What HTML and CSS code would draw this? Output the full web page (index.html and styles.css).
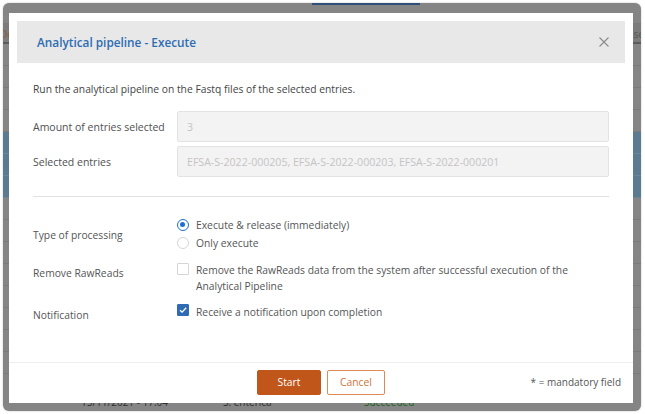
FILE: index.html
```html
<!DOCTYPE html>
<html>
<head>
<meta charset="utf-8">
<link rel="stylesheet" href="styles.css">
</head>
<body>
<div class="screen">
  <div class="bg-tab"></div>
  <div class="bg-rows">
    <div class="bg-row"></div>
    <div class="bg-row head"><span class="bg-l">De</span><span class="bg-r">se</span></div>
    <div class="bg-row"></div>
    <div class="bg-row"></div>
    <div class="bg-row"></div>
    <div class="bg-row"></div>
    <div class="bg-row sel"></div>
    <div class="bg-row sel"></div>
    <div class="bg-row sel"></div>
    <div class="bg-row"></div>
    <div class="bg-row"></div>
    <div class="bg-row"></div>
    <div class="bg-row"></div>
    <div class="bg-row"></div>
    <div class="bg-row"></div>
    <div class="bg-row"></div>
    <div class="bg-row"></div>
    <div class="bg-row last">
      <span class="c1">15/11/2021 - 17:04</span>
      <span class="c2">S. enterica</span>
      <span class="c3">Succeeded</span>
    </div>
  </div>

  <div class="modal">
    <div class="modal-head">
      <span class="modal-title">Analytical pipeline - Execute</span>
      <svg class="close" width="10" height="10" viewBox="0 0 10 10"><path d="M0.5 0.5 L9.5 9.5 M9.5 0.5 L0.5 9.5" stroke="#8a8a8a" stroke-width="1.1" fill="none"/></svg>
    </div>
    <div class="modal-body">
      <p class="intro">Run the analytical pipeline on the Fastq files of the selected entries.</p>
      <div class="form-grid">
        <div class="label strong">Amount of entries selected</div>
        <div class="input">3</div>
        <div class="label strong">Selected entries</div>
        <div class="input">EFSA-S-2022-000205, EFSA-S-2022-000203, EFSA-S-2022-000201</div>
      </div>
      <div class="sep"></div>
      <div class="opt-grid">
        <div class="label mid">Type of processing</div>
        <div class="radios">
          <div class="opt"><span class="radio on"></span><span>Execute &amp; release (immediately)</span></div>
          <div class="opt"><span class="radio"></span><span>Only execute</span></div>
        </div>
        <div class="label top">Remove RawReads</div>
        <div class="opt check-opt"><span class="box"></span><span class="check-text">Remove the RawReads data from the system after successful execution of the Analytical Pipeline</span></div>
        <div class="label top">Notification</div>
        <div class="opt check-opt"><span class="box on"><svg width="12" height="12" viewBox="0 0 12 12"><path d="M3 6.2 L5.1 8.2 L9.2 3.8" stroke="#fff" stroke-width="1.3" fill="none"/></svg></span><span class="check-text">Receive a notification upon completion</span></div>
      </div>
    </div>
    <div class="modal-foot">
      <div></div>
      <div class="buttons">
        <button class="btn primary">Start</button>
        <button class="btn secondary">Cancel</button>
      </div>
      <div class="mandatory">* = mandatory field</div>
    </div>
  </div>
</div>
</body>
</html>
```

FILE: styles.css
```css
* { box-sizing: border-box; }
html, body { margin: 0; padding: 0; background: #fff; }
body { width: 645px; height: 414px; overflow: hidden; font-family: "Open Sans", "Noto Sans", sans-serif; }

.screen {
  position: relative;
  margin: 3px 4px 0 3px;
  height: 408px;
  background: #858585;
  border-radius: 6px;
  overflow: hidden;
  box-shadow: 0 0 2px rgba(0,0,0,0.25);
}

.bg-tab {
  position: absolute;
  left: 309px;
  top: 0;
  width: 108px;
  height: 2px;
  background: #2f4f78;
}

.bg-rows { display: flex; flex-direction: column; height: 100%; }
.bg-row {
  height: 22px;
  flex: none;
  border-bottom: 1px solid #7a7a7a;
  position: relative;
  font-size: 10px;
  color: #2e2e2e;
}
.bg-row:first-child { height: 21px; }
.bg-row.head { height: 20px; background: #7c7c7c; border-bottom: 2px solid #5c5c5c; }
.bg-row.sel { background: #5d7b90; border-bottom-color: #6a8699; }
.bg-l { position: absolute; left: -3px; top: 3px; color: #8a5a3a; }
.bg-r { position: absolute; right: -3px; top: 3px; color: #555; }
.bg-row.last { height: 14px; border: 0; margin-top: auto; overflow: hidden; }
.bg-row.last span { position: absolute; top: -2px; line-height: 14px; }
.c1 { left: 78px; }
.c2 { left: 220px; }
.c3 { left: 361px; color: #17631c; }

.modal {
  position: absolute;
  left: 6px;
  top: 10px;
  width: 624px;
  height: 390px;
  background: #fff;
  display: flex;
  flex-direction: column;
}

.modal-head {
  margin: 8px 8px 0;
  height: 42px;
  background: #e8e8e8;
  display: flex;
  align-items: center;
  justify-content: space-between;
  padding: 0 16px 0 20px;
}
.modal-title {
  color: #2d6cb3;
  font-size: 11.8px;
  font-weight: 600;
}
.close { display: block; }

.modal-body {
  flex: 1;
  padding: 18px 24px 0;
  color: #555;
  font-size: 10.3px;
}
.intro { margin: 0; line-height: 16px; color: #444; }

.form-grid {
  margin-top: 14px;
  display: grid;
  grid-template-columns: 144px 1fr;
  row-gap: 4px;
  align-items: center;
}
.label { color: #555; }
.label.strong { font-size: 10.5px; color: #505050; padding-top: 1px; }
.input {
  height: 31px;
  background: #f3f3f3;
  border: 1px solid #e3e3e3;
  border-radius: 2px;
  padding: 0 9px;
  display: flex;
  align-items: center;
  color: #c4c4c4;
  font-size: 10.6px;
}

.sep { margin-top: 19px; height: 1px; background: #e2e2e2; }

.opt-grid {
  margin-top: 19px;
  display: grid;
  grid-template-columns: 144px 1fr;
  grid-template-rows: 36px auto auto;
  row-gap: 10px;
  align-items: start;
  color: #555;
}
.label.mid { align-self: center; padding-top: 1px; }
.label.top { padding-top: 3px; line-height: 16px; }

.radios { display: flex; flex-direction: column; }
.opt { display: flex; align-items: center; line-height: 18px; }
.radio {
  width: 12px;
  height: 12px;
  border-radius: 50%;
  border: 1px solid #d6d6d6;
  background: #fff;
  margin-right: 7px;
  flex: none;
  position: relative;
}
.radio.on { border-color: #1f6fcf; border-width: 1.3px; }
.radio.on::after {
  content: "";
  position: absolute;
  left: 2px; top: 2px;
  width: 5.4px; height: 5.4px;
  border-radius: 50%;
  background: #1f6fcf;
}

.check-opt { align-items: flex-start; line-height: 16px; }
.box {
  width: 12px;
  height: 12px;
  margin-top: 1px;
  margin-right: 7px;
  border: 1px solid #d6d6d6;
  border-radius: 1px;
  flex: none;
  background: #fff;
  display: flex;
}
.box.on { background: #2f6bb5; border-color: #2f6bb5; margin-top: 0; }
.box svg { margin: -1px; }
.check-text { max-width: 385px; }

.modal-foot {
  height: 41px;
  border-top: 1px solid #eeeeee;
  display: grid;
  grid-template-columns: 1fr auto 1fr;
  align-items: center;
  padding: 0 12px 2px;
}
.buttons { display: flex; gap: 6px; }
.btn {
  height: 25px;
  font-family: inherit;
  font-size: 10.3px;
  border-radius: 2px;
  cursor: pointer;
}
.btn.primary { width: 64px; background: #c0561a; border: 1px solid #c0561a; color: #fff; }
.btn.secondary { width: 58px; background: #fff; border: 1px solid #dd8a57; color: #d0733a; }
.mandatory { justify-self: end; font-size: 10px; color: #555; }
```
